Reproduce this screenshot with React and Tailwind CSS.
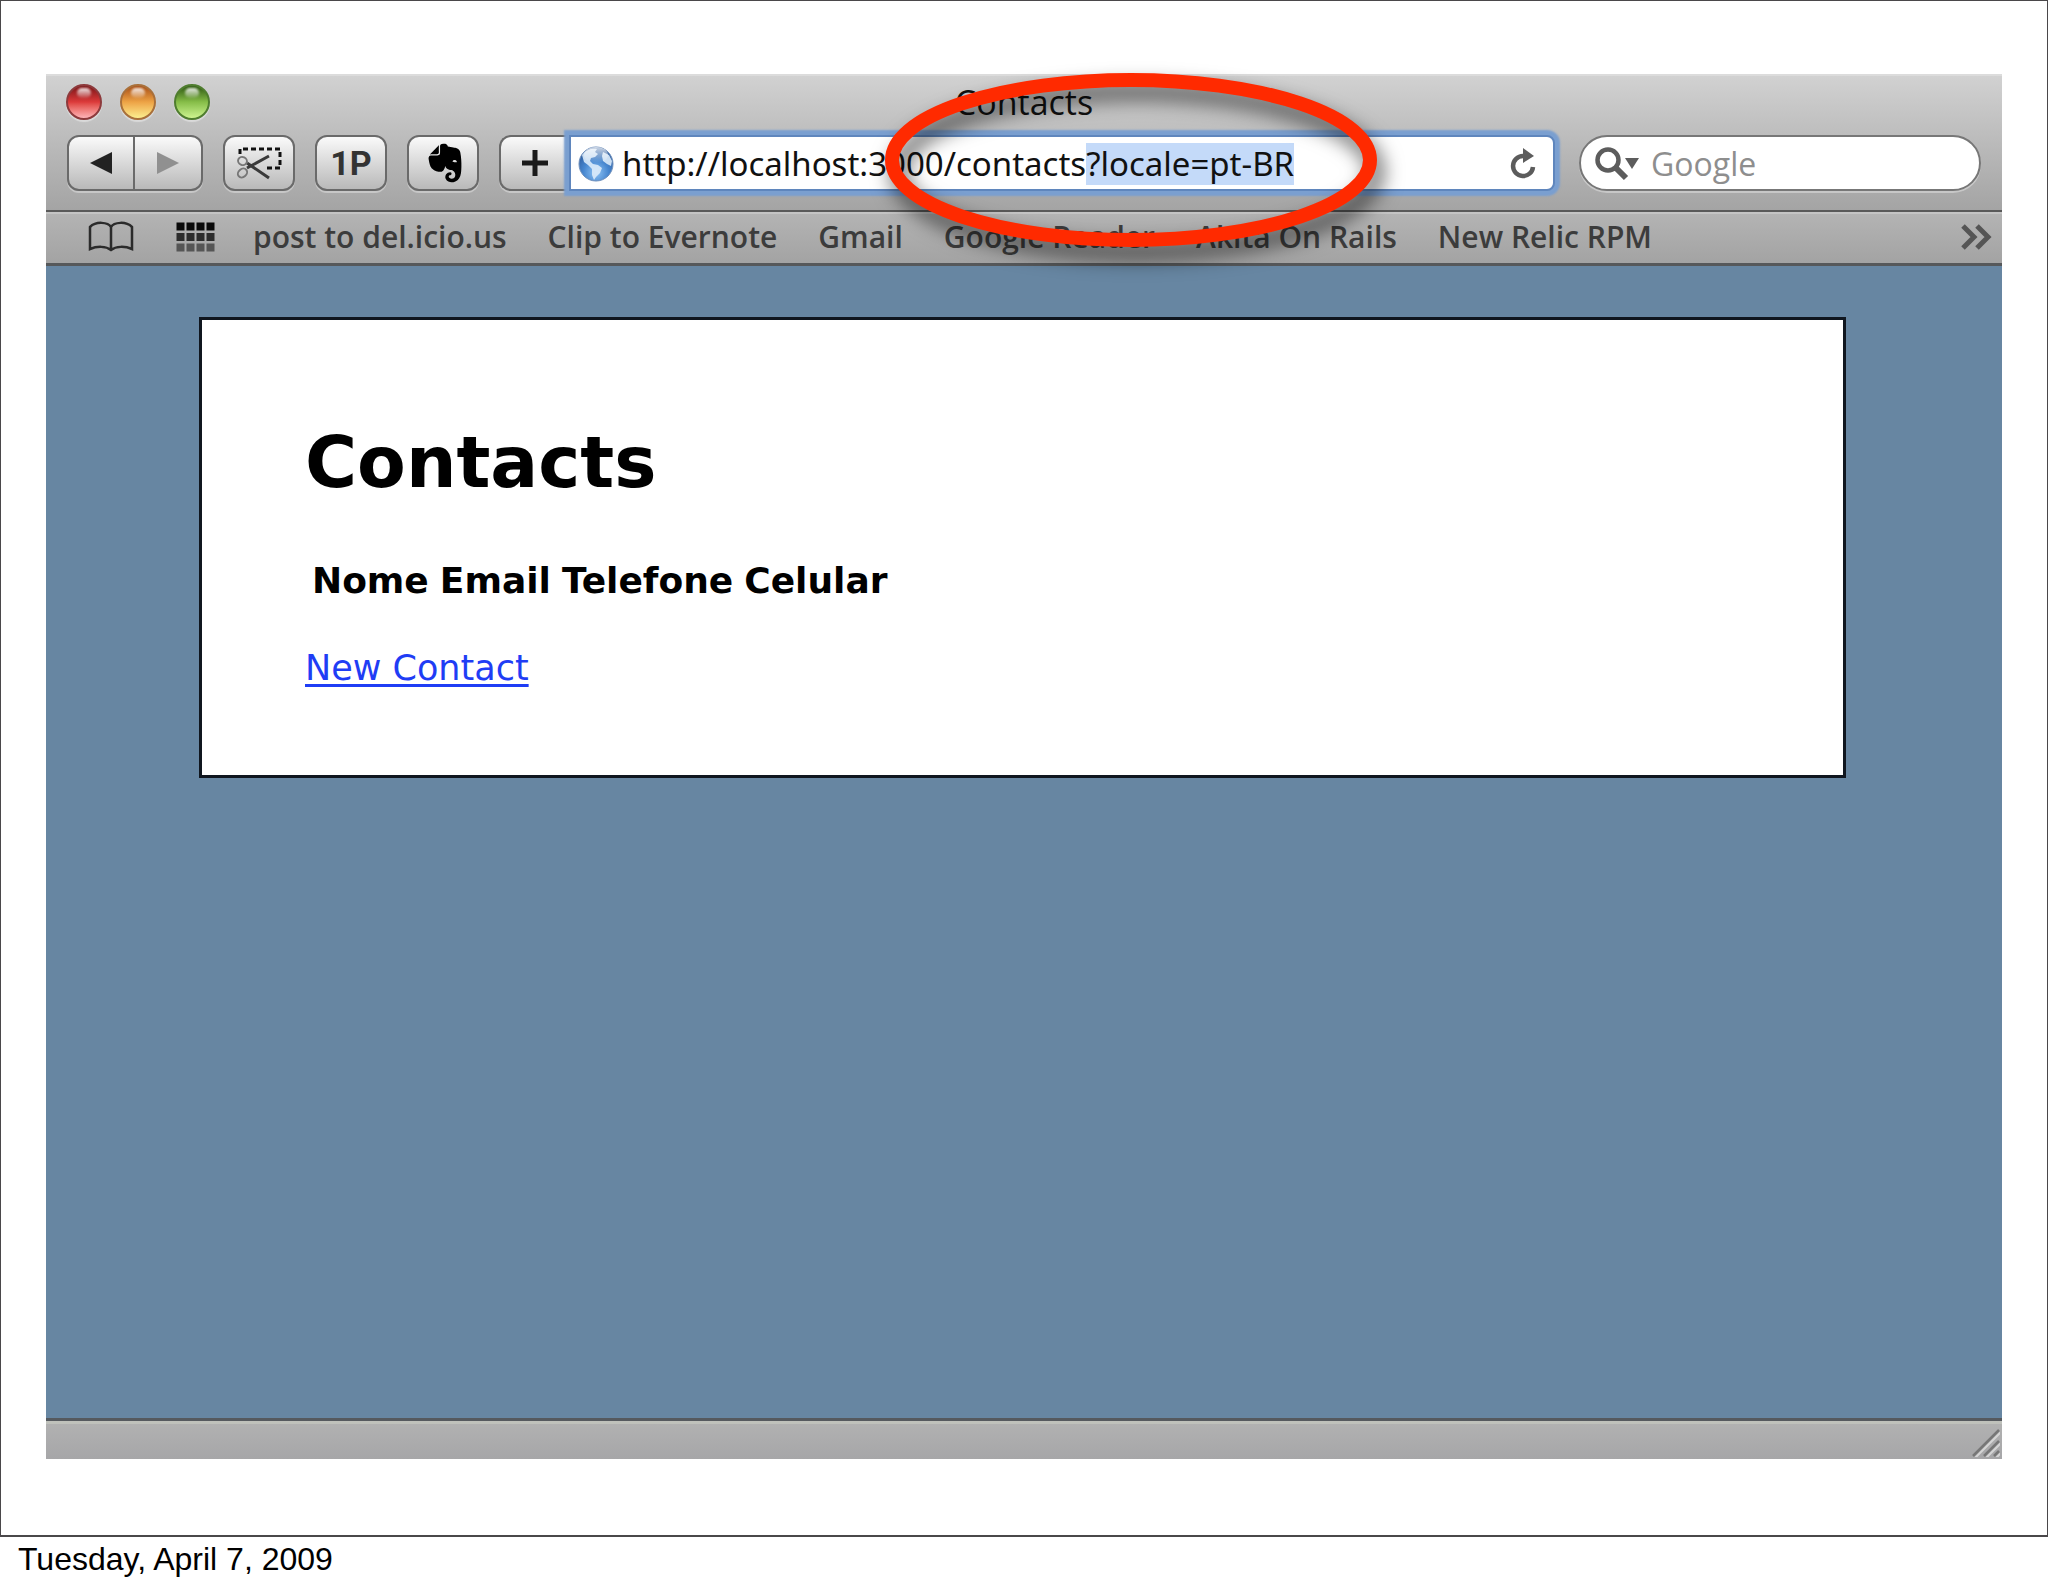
import { useEffect, useRef } from "react";
import { FaEvernote } from "react-icons/fa";

const BOOKMARKS = [
  "post to del.icio.us",
  "Clip to Evernote",
  "Gmail",
  "Google Reader",
  "Akita On Rails",
  "New Relic RPM",
];

const COLUMNS = ["Nome", "Email", "Telefone", "Celular"];

const BUTTON =
  "flex h-[56px] items-center justify-center border-2 border-[#6a6a6a] bg-linear-to-b from-[#fafafa] to-[#b9b9b9] shadow-[0_2px_0_rgba(255,255,255,0.35)]";

function Light({ label, tone }) {
  return (
    <button
      aria-label={label}
      className={`relative size-9 overflow-hidden rounded-full border-2 shadow-[0_2px_1px_rgba(255,255,255,0.4)] ${tone}`}
    >
      <span className="absolute top-0.5 left-1/2 h-2.5 w-3.5 -translate-x-1/2 rounded-full bg-linear-to-b from-white/90 to-white/10 blur-[1px]" />
    </button>
  );
}

function ScissorsIcon() {
  return (
    <svg viewBox="0 0 46 34" className="h-[34px] w-[46px]" fill="none" aria-hidden="true">
      <path d="M4 8V3H44V22H31" stroke="#111" strokeWidth="3" strokeDasharray="5 3" />
      <path d="M11 22 33 10M11 17 33 32" stroke="#3a3a3a" strokeWidth="3" />
      <ellipse cx="6.500" cy="15" rx="4.500" ry="4" transform="rotate(25 6.500 15)" stroke="#777" strokeWidth="2" />
      <ellipse cx="6.500" cy="27" rx="5" ry="4" transform="rotate(-40 6.500 27)" stroke="#777" strokeWidth="2" />
    </svg>
  );
}

function GlobeIcon() {
  return (
    <svg viewBox="0 0 36 36" className="size-9 shrink-0" aria-hidden="true">
      <defs>
        <radialGradient id="globe" cx="0.5" cy="0.75" r="0.75">
          <stop offset="0" stopColor="#8fc4f5" />
          <stop offset="0.5" stopColor="#4686cf" />
          <stop offset="1" stopColor="#2c5593" />
        </radialGradient>
        <linearGradient id="shine" x1="0" y1="0" x2="0" y2="1">
          <stop offset="0" stopColor="#fff" stopOpacity="0.75" />
          <stop offset="1" stopColor="#fff" stopOpacity="0" />
        </linearGradient>
      </defs>
      <circle cx="18" cy="18" r="17" fill="url(#globe)" stroke="#6e8fbb" />
      <path
        d="M4 9C8 3 15 2 19 3L17 6 20 8 17 11 13 12 12 15 15 18 20 19 24 22 22 27 18 31 16 34 14 29 14 23 10 19 6 16ZM25 6 31 9 34 15 33 20 29 18 25 15 24 10Z"
        fill="#dcebf9"
        opacity="0.9"
      />
      <ellipse cx="18" cy="9" rx="12" ry="8" fill="url(#shine)" />
    </svg>
  );
}

function BookIcon() {
  return (
    <svg viewBox="0 0 46 32" className="h-8 w-[46px]" fill="none" stroke="#2b2b2b" strokeWidth="2.500" aria-hidden="true">
      <path d="M23 6C20 1 8 0 2 6V28C9 25 18 25 23 29C28 25 37 25 44 28V6C38 0 26 1 23 6ZM23 6V29" />
    </svg>
  );
}

function GridIcon() {
  const rows = ["#0a0a0a", "#2c2c2c", "#555"];
  return (
    <svg viewBox="0 0 39 30" className="h-[30px] w-[39px]" aria-hidden="true">
      {rows.map((fill, r) =>
        [0, 1, 2, 3].map((c) => (
          <rect key={`${r}-${c}`} x={c * 10 + 0.5} y={r * 10.500 + 0.5} width="8" height="8" fill={fill} />
        ))
      )}
    </svg>
  );
}

function TitleBar() {
  return (
    <div className="grid h-[56px] grid-cols-3 items-center px-5">
      <div className="flex gap-[18px]">
        <Light label="Close" tone="border-[#8d3a3c] bg-linear-to-b from-[#7c1518] via-[#dc3a3a] to-[#fdb3b8]" />
        <Light label="Minimize" tone="border-[#a9703a] bg-linear-to-b from-[#a94e14] via-[#eda345] to-[#fbee8e]" />
        <Light label="Zoom" tone="border-[#4f7d2f] bg-linear-to-b from-[#2f5a12] via-[#86bd48] to-[#cdf48f]" />
      </div>
      <div className="text-center text-[34px] leading-[44px] font-medium text-[#111]">Contacts</div>
    </div>
  );
}

function Toolbar() {
  const url = useRef(null);

  useEffect(() => {
    const field = url.current;
    field.focus();
    field.setSelectionRange(field.value.indexOf("?"), field.value.length);
  }, []);

  return (
    <div className="flex px-[21px] pt-[5px] pb-[19px]">
      <div className="flex">
        <button aria-label="Back" className={`${BUTTON} w-[68px] rounded-l-xl`}>
          <svg viewBox="0 0 22 22" className="size-[22px]" aria-hidden="true">
            <path d="M22 0V22L0 11Z" fill="#222" />
          </svg>
        </button>
        <button aria-label="Forward" className={`${BUTTON} w-[68px] rounded-r-xl border-l-0`}>
          <svg viewBox="0 0 22 22" className="size-[22px]" aria-hidden="true">
            <path d="M0 0V22L22 11Z" fill="#909090" />
          </svg>
        </button>
      </div>
      <button aria-label="Clip" className={`${BUTTON} ml-5 w-[72px] rounded-xl`}>
        <ScissorsIcon />
      </button>
      <button className={`${BUTTON} ml-5 w-[72px] rounded-xl font-['Roboto',sans-serif] text-[34px] leading-none font-bold text-[#333]`}>
        1P
      </button>
      <button aria-label="Evernote" className={`${BUTTON} ml-5 w-[72px] rounded-xl pl-1`}>
        <FaEvernote className="size-[44px] text-black" />
      </button>
      <button aria-label="Add bookmark" className={`${BUTTON} ml-5 w-[70px] rounded-l-xl border-r-0`}>
        <svg viewBox="0 0 26 26" className="size-[26px]" aria-hidden="true">
          <path d="M13 0V26M0 13H26" stroke="#1a1a1a" strokeWidth="5" />
        </svg>
      </button>
      <div className="flex h-[56px] flex-1 items-center rounded-r-lg border-2 border-[#5f86bd] bg-white pt-0.5 pr-4 pl-[7px] shadow-[0_0_2px_5px_#7a9fd0]">
        <GlobeIcon />
        <input
          ref={url}
          aria-label="Address"
          defaultValue="http://localhost:3000/contacts?locale=pt-BR"
          spellCheck={false}
          className="ml-2 min-w-0 flex-1 font-['Noto_Sans',sans-serif] text-[33px] leading-[42px] text-[#111] outline-none selection:bg-[#c4daf9] selection:text-[#111]"
        />
        <button aria-label="Reload">
          <svg viewBox="0 0 28 32" className="h-8 w-7" fill="none" aria-hidden="true">
            <path d="M14 8A10 10 0 1 0 24 19" stroke="#5c5c5c" strokeWidth="4.500" />
            <path d="M14 0V15L25 8Z" fill="#5c5c5c" />
          </svg>
        </button>
      </div>
      <label className="ml-6 flex h-[56px] w-[402px] items-center rounded-full border-2 border-[#777] bg-white pt-0.5 pl-3.5 shadow-[0_2px_0_rgba(255,255,255,0.35)]">
        <svg viewBox="0 0 44 34" className="h-[34px] w-11 shrink-0" fill="none" aria-hidden="true">
          <circle cx="13" cy="13" r="10.500" stroke="#5c5c5c" strokeWidth="4.500" />
          <path d="M20 20 31 31" stroke="#5c5c5c" strokeWidth="6" />
          <path d="M30 11H44L37 22Z" fill="#5c5c5c" />
        </svg>
        <input
          aria-label="Search"
          placeholder="Google"
          className="ml-3 w-full min-w-0 rounded-full text-[32px] leading-[42px] outline-none placeholder:text-[#8e8e8e]"
        />
      </label>
    </div>
  );
}

function BookmarksBar() {
  return (
    <nav className="flex h-[56px] items-center border-t-2 border-b-[3px] border-t-[#595959] border-b-[#56585a] bg-linear-to-b from-[#b4b4b4] to-[#a3a3a3] pr-2 pb-px pl-[42px] shadow-[inset_0_2px_0_#c4c4c4]">
      <button aria-label="Show all bookmarks">
        <BookIcon />
      </button>
      <button aria-label="Top sites" className="ml-[42px]">
        <GridIcon />
      </button>
      <div className="ml-[38px] flex flex-1 gap-[41px]">
        {BOOKMARKS.map((name) => (
          <a key={name} href="#" className="text-[30px] leading-9 font-semibold whitespace-nowrap text-[#3c3c3c]">
            {name}
          </a>
        ))}
      </div>
      <button aria-label="More bookmarks">
        <svg viewBox="0 0 34 26" className="h-[26px] w-[34px]" fill="none" stroke="#555" strokeWidth="5" aria-hidden="true">
          <path d="M3 2 14 13 3 24M17 2 28 13 17 24" />
        </svg>
      </button>
    </nav>
  );
}

function Highlight() {
  return (
    <svg
      viewBox="0 0 492 174"
      className="pointer-events-none absolute -top-px left-[839px] h-[174px] w-[492px] overflow-visible drop-shadow-[6px_12px_10px_rgba(0,0,0,0.65)]"
      fill="none"
      aria-hidden="true"
    >
      <ellipse cx="246" cy="87" rx="239" ry="80" stroke="#ff2a00" strokeWidth="14" />
    </svg>
  );
}

export default function App() {
  return (
    <div className="flex min-h-screen flex-col bg-white font-['Open_Sans',sans-serif]">
      <div className="flex flex-1 flex-col border border-b-2 border-[#4a484a] px-[45px] pt-[73px] pb-[76px]">
        <div className="relative flex flex-1 flex-col">
          <header className="bg-linear-to-b from-[#d2d2d2] to-[#a4a4a4] shadow-[inset_0_2px_0_#dcdcdc]">
            <TitleBar />
            <Toolbar />
          </header>
          <BookmarksBar />
          <Highlight />
          <main className="flex-1 bg-[#6786a2] pt-[51px] pr-[156px] pb-10 pl-[153px] font-['DejaVu_Sans',sans-serif]">
            <div className="border-[3px] border-[#10161f] bg-white px-[103px] pt-[103px] pb-[86px] text-[35px] leading-[42px] text-black">
              <h1 className="text-[71px] leading-[80px] font-bold">Contacts</h1>
              <table className="mt-[57px] ml-[7px] text-[36px]">
                <thead>
                  <tr>
                    {COLUMNS.map((name) => (
                      <th key={name} scope="col" className="pr-[11px] text-left font-bold">
                        {name}
                      </th>
                    ))}
                  </tr>
                </thead>
              </table>
              <a href="#" className="mt-[45px] inline-block text-[#1f3df5] underline decoration-3 underline-offset-4">
                New Contact
              </a>
            </div>
          </main>
          <footer className="flex h-[41px] items-end justify-end border-t-[3px] border-[#55595e] bg-linear-to-b from-[#b2b2b2] to-[#a6a6a8] pr-0.5 pb-0.5 shadow-[inset_0_3px_0_#bfc1bb]">
            <svg viewBox="0 0 28 28" className="size-7" fill="none" aria-hidden="true">
              <path d="M3 29 29 3M14 29 29 14M24 29 29 24" stroke="#d5d5d5" strokeWidth="2" />
              <path d="M1 27 27 1M12 27 27 12M22 27 27 22" stroke="#777" strokeWidth="2.500" />
            </svg>
          </footer>
        </div>
      </div>
      <p className="h-[50px] px-[18px] pt-[3px] font-['Liberation_Sans',sans-serif] text-[32px] leading-[38px] text-black">
        Tuesday, April 7, 2009
      </p>
    </div>
  );
}
